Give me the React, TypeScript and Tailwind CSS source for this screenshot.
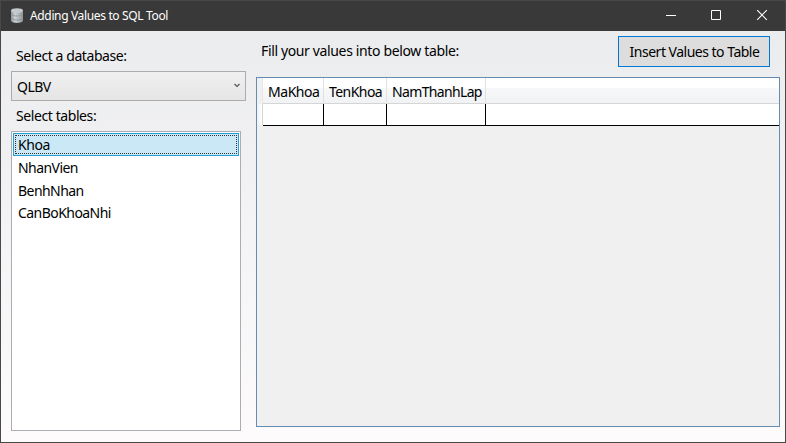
const tables = ["NhanVien", "BenhNhan", "CanBoKhoaNhi"];

function DatabaseIcon() {
  return (
    <svg width="14" height="16" viewBox="0 0 14 16" className="ml-[9px] shrink-0">
      <defs>
        <linearGradient id="metal" x1="0" x2="1" y1="0" y2="0">
          <stop offset="0" stopColor="#8d9599" />
          <stop offset="0.35" stopColor="#ccd2d4" />
          <stop offset="1" stopColor="#8d9599" />
        </linearGradient>
      </defs>
      <path d="M1 2.500v10c0 1.300 2.600 2.400 6 2.400s6-1.100 6-2.400v-10z" fill="url(#metal)" />
      <ellipse cx="7" cy="2.500" rx="6" ry="2.300" fill="#c3c9cc" />
      <path d="M1 6c.5 1.200 3 2 6 2s5.500-.8 6-2M1 10c.5 1.200 3 2 6 2s5.500-.8 6-2" fill="none" stroke="#8a9296" strokeWidth=".8" />
    </svg>
  );
}

function TitleBar() {
  return (
    <header className="flex h-[30px] items-center bg-[#393939] text-white">
      <DatabaseIcon />
      <span className="ml-[6px] text-[12px] leading-[16px] tracking-[-0.35px] whitespace-nowrap">Adding Values to SQL Tool</span>
      <div className="-mr-px ml-auto flex">
        <svg width="46" height="30" viewBox="0 0 46 30" stroke="white" fill="none"><path d="M18 14.500h10" /></svg>
        <svg width="46" height="30" viewBox="0 0 46 30" stroke="white" fill="none"><path d="M17.500 9.500h9v9h-9z" /></svg>
        <svg width="46" height="30" viewBox="0 0 46 30" stroke="white" fill="none" strokeWidth="1.1"><path d="M17.200 9.200l9.600 9.600m0-9.600l-9.600 9.600" /></svg>
      </div>
    </header>
  );
}

function Sidebar() {
  return (
    <aside className="flex w-[235px] flex-col">
      <div className="ml-[5px] mt-[15px] h-5 leading-5 tracking-[-0.42px]">Select a database:</div>
      <div className="mt-[5px] flex h-[30px] items-center justify-between border border-[#acacac] bg-linear-to-b from-[#f0f0f0] to-[#e5e5e5] pl-[5px] pr-[5px]">
        <span className="pt-px tracking-[-0.55px]">QLBV</span>
        <svg width="6" height="5" viewBox="0 0 6 5" className="mb-px" fill="none" stroke="#555" strokeWidth="1.2"><path d="M.5 1L3 3.500 5.500 1" /></svg>
      </div>
      <div className="ml-[5px] mt-[5px] h-5 leading-5 tracking-[-0.41px]">Select tables:</div>
      <ul className="mt-[5px] h-[300px] w-[230px] border border-[#abadb3] bg-white p-px">
        <li className="mb-px h-[23px] border border-[#26a0da] bg-[#cbe8f6] p-px">
          <div className="h-[19px] border border-dotted border-[#333] pl-[2px] leading-[17px] tracking-[-0.4px]">Khoa</div>
        </li>
        {tables.map((t) => (
          <li key={t} className="h-[22.5px] pl-[5px] leading-[22px] tracking-[-0.55px]">{t}</li>
        ))}
      </ul>
    </aside>
  );
}

function ValuesGrid() {
  const head = "border-r border-[#dfe1e3] pl-[5px] whitespace-nowrap";
  return (
    <div className="mt-[10px] flex h-[350px] w-[524px] border border-[#688caf] bg-[#f0f0f0]">
      <div className="h-[48px] w-[6px] shrink-0">
        <div className="h-[26px] border-r border-[#e7e7e7] bg-[#f0f0f0]" />
        <div className="h-[21px] border-r border-[#d5d5d5] bg-linear-to-r from-[#f0f1f3] to-white" />
      </div>
      <div className="flex-1">
        <div className="grid h-[26px] grid-cols-[61px_63px_99px_1fr] border-b border-[#d5d5d5] bg-linear-to-b from-white from-40% via-[#f7f8fa] via-41% to-[#f1f2f4] leading-[28px]">
          <div className={`${head} tracking-[-0.45px]`}>MaKhoa</div>
          <div className={`${head} tracking-[-0.55px]`}>TenKhoa</div>
          <div className={`${head} tracking-[-0.65px]`}>NamThanhLap</div>
          <div />
        </div>
        <div className="grid h-[22px] grid-cols-[61px_63px_99px_1fr] border-b border-black bg-white">
          <div className="border-r border-black" />
          <div className="border-r border-black" />
          <div className="border-r border-black" />
          <div />
        </div>
      </div>
    </div>
  );
}

export default function App() {
  return (
    <div className="h-[443px] w-[786px] overflow-hidden border border-[#484848] font-['Noto_Sans','Open_Sans',sans-serif] text-[14px] text-black">
      <TitleBar />
      <main className="flex h-[411px] bg-linear-to-b from-[#ebecee] to-[#fdfbfc] pl-[10px]">
        <Sidebar />
        <section className="ml-[10px] w-[524px]">
          <div className="flex h-[36px] justify-between pr-[10px] pt-[5px]">
            <div className="ml-[5px] mt-[5px] h-5 leading-5 tracking-[-0.36px]">Fill your values into below table:</div>
            <button className="h-[31px] w-[152px] border border-[#0078d7] bg-[#dddddd] pl-px pt-px leading-[28px] tracking-[-0.5px] whitespace-nowrap">Insert Values to Table</button>
          </div>
          <ValuesGrid />
        </section>
      </main>
    </div>
  );
}
